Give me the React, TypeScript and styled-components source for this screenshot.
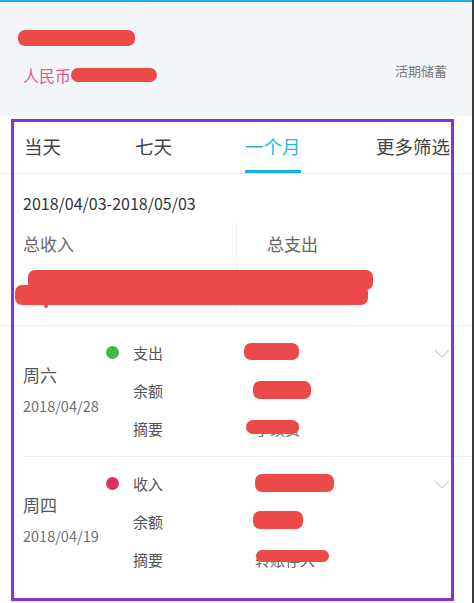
import styled, { createGlobalStyle } from "styled-components";

const GlobalStyle = createGlobalStyle`
  html, body {
    margin: 0;
    padding: 0;
    background: #3b3b3b;
  }
  body {
    font-family: "Noto Sans CJK SC", "Noto Sans", sans-serif;
  }
  * {
    box-sizing: border-box;
  }
`;

const Page = styled.div`
  position: relative;
  width: 472px;
  min-height: 100vh;
  background: #ffffff;
`;

const Header = styled.header`
  height: 116px;
  border-top: 2px solid #1ab2eb;
  background: #f3f6f9;
  padding: 28px 25px 0 23px;
  display: flex;
  flex-direction: column;
`;

const Redact = styled.span<{ $w: number; $h: number }>`
  display: inline-block;
  width: ${(p) => p.$w}px;
  height: ${(p) => p.$h}px;
  border-radius: 7px;
  background: #ec4949;
`;

const NameBlob = styled(Redact)`
  margin-left: -5px;
`;

const BalanceRow = styled.div`
  margin-top: 21px;
  height: 16px;
  display: flex;
  align-items: center;
  justify-content: space-between;
`;

const Currency = styled.div`
  display: flex;
  align-items: center;
  font-size: 16px;
  line-height: 16px;
  color: #e4588a;
`;

const AccountType = styled.span`
  font-size: 13px;
  line-height: 16px;
  color: #7a7a7a;
  margin-bottom: 8px;
`;

const TabBar = styled.nav`
  height: 58px;
  padding-left: 24px;
  display: grid;
  grid-template-columns: 111px 110px 131px auto;
  justify-items: start;
  border-bottom: 1px solid #ededed;
`;

const Tab = styled.div<{ $active?: boolean }>`
  height: 57px;
  padding-top: 6px;
  display: flex;
  align-items: center;
  font-size: 18.5px;
  color: ${(p) => (p.$active ? "#2ab4ea" : "#444444")};
  border-bottom: 3px solid ${(p) => (p.$active ? "#12b0e8" : "transparent")};
`;

const Period = styled.div`
  padding: 19px 0 0 23px;
  font-size: 16px;
  line-height: 20px;
  color: #333333;
`;

const Summary = styled.section`
  position: relative;
  margin-top: 9px;
  padding-bottom: 11px;
  border-bottom: 1px solid #ededed;
`;

const SummaryGrid = styled.div`
  display: grid;
  grid-template-columns: 213px 1fr;
  height: 92px;
  margin-left: 23px;
`;

const SummaryCell = styled.div<{ $right?: boolean }>`
  padding-top: 10px;
  padding-left: ${(p) => (p.$right ? 30 : 0)}px;
  border-left: ${(p) => (p.$right ? "1px solid #efefef" : "none")};
  font-size: 17px;
  line-height: 24px;
  color: #666666;
`;

const TotalsBlob = styled.svg`
  position: absolute;
  left: 0;
  top: 0;
`;

const Row = styled.div`
  margin-left: 23px;
  height: 130px;
  padding-top: 7px;
  display: flex;

  & + & {
    border-top: 1px solid #efefef;
  }
`;

const DateCol = styled.div`
  width: 83px;
  display: flex;
  flex-direction: column;
  justify-content: center;
  gap: 9px;
  padding-bottom: 11px;
`;

const Weekday = styled.div`
  font-size: 17px;
  line-height: 24px;
  color: #555555;
`;

const DayDate = styled.div`
  font-size: 14.5px;
  line-height: 20px;
  color: #707070;
`;

const Lines = styled.div`
  flex: 1;
  display: flex;
  flex-direction: column;
`;

const Line = styled.div`
  height: 38px;
  display: flex;
  align-items: center;
`;

const Dot = styled.span<{ $color?: string }>`
  width: 13px;
  height: 13px;
  margin-right: 14px;
  border-radius: 50%;
  background: ${(p) => p.$color ?? "transparent"};
`;

const Label = styled.span`
  width: 122px;
  font-size: 15px;
  color: #555555;
`;

const Value = styled.span`
  position: relative;
  flex: 1;
  height: 38px;
  display: flex;
  align-items: center;
  font-size: 15px;
  color: #666666;
`;

const ValueBlob = styled(Redact)<{ $dx: number; $dy: number }>`
  position: absolute;
  left: ${(p) => p.$dx}px;
  top: ${(p) => p.$dy}px;
`;

const Chevron = styled.svg`
  align-self: flex-start;
  margin: 16px 22px 0 0;
`;

const Annotation = styled.div`
  position: absolute;
  left: 11px;
  top: 119px;
  width: 443px;
  height: 482px;
  border: 3px solid #8b2fd7;
  pointer-events: none;
`;

type Blob = { dx: number; dy: number; w: number; h: number };

type Entry = {
  weekday: string;
  date: string;
  kind: string;
  color: string;
  memo: string;
  blobs: [Blob, Blob, Blob];
};

const entries: Entry[] = [
  {
    weekday: "周六",
    date: "2018/04/28",
    kind: "支出",
    color: "#46b649",
    memo: "手续费",
    blobs: [
      { dx: -11, dy: 10, w: 55, h: 17 },
      { dx: -2, dy: 10, w: 58, h: 18 },
      { dx: -9, dy: 11, w: 53, h: 14 },
    ],
  },
  {
    weekday: "周四",
    date: "2018/04/19",
    kind: "收入",
    color: "#dc2f5e",
    memo: "转账存入",
    blobs: [
      { dx: 0, dy: 10, w: 79, h: 18 },
      { dx: -2, dy: 9, w: 50, h: 18 },
      { dx: 1, dy: 10, w: 73, h: 12 },
    ],
  },
];

const tabs = ["当天", "七天", "一个月", "更多筛选"];

const Masked = ({ blob }: { blob: Blob }) => (
  <ValueBlob $dx={blob.dx} $dy={blob.dy} $w={blob.w} $h={blob.h} />
);

export default function App() {
  return (
    <Page>
      <GlobalStyle />
      <Header>
        <NameBlob $w={117} $h={16} />
        <BalanceRow>
          <Currency>
            人民币
            <Redact $w={86} $h={14} />
          </Currency>
          <AccountType>活期储蓄</AccountType>
        </BalanceRow>
      </Header>

      <TabBar>
        {tabs.map((t) => (
          <Tab key={t} $active={t === "一个月"}>
            {t}
          </Tab>
        ))}
      </TabBar>

      <Period>2018/04/03-2018/05/03</Period>

      <Summary>
        <SummaryGrid>
          <SummaryCell>总收入</SummaryCell>
          <SummaryCell $right>总支出</SummaryCell>
        </SummaryGrid>
        <TotalsBlob width="380" height="90" viewBox="0 0 380 90">
          <rect x="28" y="48" width="345" height="20" rx="7" fill="#ec4949" />
          <rect x="15" y="63" width="353" height="20" rx="7" fill="#ec4949" />
          <circle cx="46" cy="84" r="2" fill="#ec4949" />
        </TotalsBlob>
      </Summary>

      {entries.map((e) => (
        <Row key={e.date}>
          <DateCol>
            <Weekday>{e.weekday}</Weekday>
            <DayDate>{e.date}</DayDate>
          </DateCol>
          <Lines>
            <Line>
              <Dot $color={e.color} />
              <Label>{e.kind}</Label>
              <Value>
                <Masked blob={e.blobs[0]} />
              </Value>
            </Line>
            <Line>
              <Dot />
              <Label>余额</Label>
              <Value>
                <Masked blob={e.blobs[1]} />
              </Value>
            </Line>
            <Line>
              <Dot />
              <Label>摘要</Label>
              <Value>
                {e.memo}
                <Masked blob={e.blobs[2]} />
              </Value>
            </Line>
          </Lines>
          <Chevron width="16" height="9" viewBox="0 0 16 9">
            <polyline points="1,1 8,8 15,1" fill="none" stroke="#cfcfcf" strokeWidth="1.2" />
          </Chevron>
        </Row>
      ))}

      <Annotation />
    </Page>
  );
}
